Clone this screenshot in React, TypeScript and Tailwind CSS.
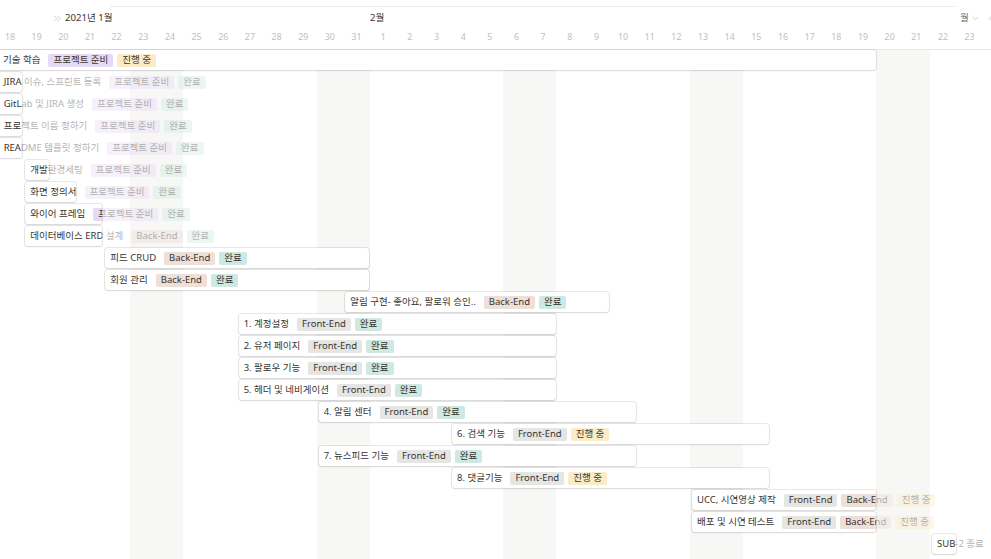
import React from "react";
import { ChevronsRight, ChevronDown, ChevronLeft } from "lucide-react";

const COL = 80 / 3;
const X0 = -10 / 3;
const colLeft = (k: number) => X0 + COL * k;

type TagKey = "prep" | "prog" | "done" | "be" | "fe";
const TAGS: Record<TagKey, { label: string; cls: string }> = {
  prep: { label: "프로젝트 준비", cls: "bg-[#e5daf5]" },
  prog: { label: "진행 중", cls: "bg-[#fbebc6]" },
  done: { label: "완료", cls: "bg-[#cfe8e2]" },
  be: { label: "Back-End", cls: "bg-[#eedfd8]" },
  fe: { label: "Front-End", cls: "bg-[#e5e5e4]" },
};

type BarData = { s: number; e: number; title: string; tags: TagKey[]; sticky?: boolean };

const BARS: BarData[] = [
  { s: -1, e: 33, title: "기술 학습", tags: ["prep", "prog"], sticky: true },
  { s: 0, e: 1, title: "JIRA 이슈, 스프린트 등록", tags: ["prep", "done"] },
  { s: 0, e: 1, title: "GitLab 및 JIRA 생성", tags: ["prep", "done"] },
  { s: 0, e: 1, title: "프로젝트 이름 정하기", tags: ["prep", "done"] },
  { s: 0, e: 1, title: "README 템플릿 정하기", tags: ["prep", "done"] },
  { s: 1, e: 2, title: "개발환경세팅", tags: ["prep", "done"] },
  { s: 1, e: 3, title: "화면 정의서", tags: ["prep", "done"] },
  { s: 1, e: 4, title: "와이어 프레임", tags: ["prep", "done"] },
  { s: 1, e: 4, title: "데이터베이스 ERD 설계", tags: ["be", "done"] },
  { s: 4, e: 14, title: "피드 CRUD", tags: ["be", "done"] },
  { s: 4, e: 14, title: "회원 관리", tags: ["be", "done"] },
  { s: 13, e: 23, title: "알림 구현- 좋아요, 팔로워 승인..", tags: ["be", "done"] },
  { s: 9, e: 21, title: "1. 계정설정", tags: ["fe", "done"] },
  { s: 9, e: 21, title: "2. 유저 페이지", tags: ["fe", "done"] },
  { s: 9, e: 21, title: "3. 팔로우 기능", tags: ["fe", "done"] },
  { s: 9, e: 21, title: "5. 헤더 및 네비게이션", tags: ["fe", "done"] },
  { s: 12, e: 24, title: "4. 알림 센터", tags: ["fe", "done"] },
  { s: 17, e: 29, title: "6. 검색 기능", tags: ["fe", "prog"] },
  { s: 12, e: 24, title: "7. 뉴스피드 기능", tags: ["fe", "done"] },
  { s: 17, e: 29, title: "8. 댓글기능", tags: ["fe", "prog"] },
  { s: 26, e: 33, title: "UCC, 시연영상 제작", tags: ["fe", "be", "prog"] },
  { s: 26, e: 33, title: "배포 및 시연 테스트", tags: ["fe", "be", "prog"] },
  { s: 35, e: 36, title: "SUB-2 종료", tags: [] },
];

const DAYS: { d: number; weekend: boolean }[] = [];
for (let d = 18; d <= 31; d++) DAYS.push({ d, weekend: d === 23 || d === 24 || d === 30 || d === 31 });
for (let d = 1; d <= 24; d++) DAYS.push({ d, weekend: d === 6 || d === 7 || d === 13 || d === 14 || d === 20 || d === 21 });

function Content({ bar }: { bar: BarData }) {
  return (
    <div className="flex items-center h-[20px] whitespace-nowrap">
      <span className="text-[9.5px] leading-none text-[#37352f] mr-[8px]">{bar.title}</span>
      <div className="flex items-center gap-[4px]">
        {bar.tags.map((t, i) => (
          <span
            key={i}
            className={`inline-flex items-center h-[13px] px-[5px] rounded-[2px] text-[9.5px] leading-none text-[#37352f] ${TAGS[t].cls}`}
          >
            {TAGS[t].label}
          </span>
        ))}
      </div>
    </div>
  );
}

function Bar({ bar, row }: { bar: BarData; row: number }) {
  const left = colLeft(bar.s) + 2;
  const right = colLeft(bar.e) - 1;
  const width = right - left;
  const top = 22 * row;
  const contentLeft = bar.sticky ? 3 : left + 5;
  return (
    <>
      <div className="absolute opacity-[0.38]" style={{ left: contentLeft, top }}>
        <Content bar={bar} />
      </div>
      <div
        className="absolute h-[20px] bg-white rounded-[3px] overflow-hidden shadow-[0_0_0_1px_rgba(15,15,15,0.09),0_1px_2px_rgba(15,15,15,0.08)]"
        style={{ left, top, width }}
      >
        <div className="absolute top-0" style={{ left: contentLeft - left }}>
          <Content bar={bar} />
        </div>
      </div>
    </>
  );
}

export default function App() {
  return (
    <div
      className="w-[991px] h-[559px] overflow-hidden bg-white text-[#37352f]"
      style={{ fontFamily: '"Noto Sans", "Noto Sans CJK KR", sans-serif' }}
    >
      {/* header */}
      <div className="relative h-[50px] pt-[6px] border-b border-[#e9e9e7]">
        <div className="ml-[110px] w-[845px] h-px bg-[#ebebea]" />
        <div className="relative h-[22px]">
          <div className="absolute left-[52px] top-0 h-full flex items-center gap-[2px]">
            <ChevronsRight size={11} strokeWidth={1.4} className="text-[#b4b4b1]" />
            <span className="text-[9.6px] leading-none text-[#37352f]">2021년 1월</span>
          </div>
          <div className="absolute left-[370px] top-0 h-full flex items-center">
            <span className="text-[9.6px] leading-none text-[#37352f]">2월</span>
          </div>
          <div className="absolute left-[960px] top-0 h-full flex items-center gap-[2px]">
            <span className="text-[9.6px] leading-none text-[#6f6e69]">월</span>
            <ChevronDown size={9} strokeWidth={1.5} className="text-[#a5a4a0]" />
          </div>
          <div className="absolute left-[986px] top-0 h-full flex items-center">
            <ChevronLeft size={9} strokeWidth={1.5} className="text-[#a5a4a0]" />
          </div>
        </div>
        <div className="flex h-[16px] ml-[-3.333px]">
          {DAYS.map((d, i) => (
            <div
              key={i}
              className="w-[26.667px] shrink-0 flex items-center justify-center text-[8.8px] leading-none text-[#c0c0bd]"
            >
              {d.d}
            </div>
          ))}
        </div>
      </div>

      {/* body */}
      <div className="relative h-[509px]">
        <div className="absolute inset-0 flex ml-[-3.333px]">
          {DAYS.map((d, i) => (
            <div key={i} className={`w-[26.667px] shrink-0 h-full ${d.weekend ? "bg-[#f7f7f6]" : ""}`} />
          ))}
        </div>
        {BARS.map((b, i) => (
          <Bar key={i} bar={b} row={i} />
        ))}
      </div>
    </div>
  );
}
